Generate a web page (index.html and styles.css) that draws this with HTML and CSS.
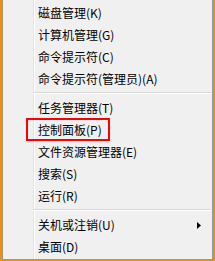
FILE: index.html
```html
<!DOCTYPE html>
<html lang="zh-CN">
<head>
<meta charset="utf-8">
<link rel="stylesheet" href="styles.css">
</head>
<body>
<div class="menu">
  <div class="group first">
    <div class="item">磁盘管理(K)</div>
    <div class="item">计算机管理(G)</div>
    <div class="item">命令提示符(C)</div>
    <div class="item">命令提示符(管理员)(A)</div>
  </div>
  <div class="sep"></div>
  <div class="group">
    <div class="item">任务管理器(T)</div>
    <div class="item marked">控制面板(P)<span class="mark"></span></div>
    <div class="item">文件资源管理器(E)</div>
    <div class="item">搜索(S)</div>
    <div class="item">运行(R)</div>
  </div>
  <div class="sep"></div>
  <div class="group">
    <div class="item sub">关机或注销(U)<svg class="arrow" width="4" height="7" viewBox="0 0 4 7"><path d="M0 0 L4 3.5 L0 7 Z" fill="#000"/></svg></div>
    <div class="item">桌面(D)</div>
  </div>
</div>
</body>
</html>
```

FILE: styles.css
```css
html, body {
  margin: 0;
  padding: 0;
}
body {
  width: 215px;
  height: 261px;
  background: #e8900f;
  overflow: hidden;
  font-family: "Noto Sans CJK SC", "Microsoft YaHei", sans-serif;
  font-size: 12px;
  color: #000;
}
.menu {
  margin-left: 2px;
  width: 209px;
  height: 259px;
  border: 1px solid #979797;
  border-top: none;
  background-color: #f0f0f0;
  background-image: linear-gradient(to right, transparent 30px, #e2e3e3 30px, #e2e3e3 31px, #ffffff 31px, #ffffff 32px, transparent 32px);
  padding-left: 32px;
  box-sizing: content-box;
  display: flex;
  flex-direction: column;
  width: 177px;
}
.group.first {
  margin-top: 2px;
}
.item {
  height: 22px;
  line-height: 22px;
  padding-left: 3px;
  position: relative;
  white-space: nowrap;
}
.sep {
  margin: 2px 1px 3px -2px;
  border-top: 1px solid #d7d7d7;
  border-bottom: 1px solid #ffffff;
}
.mark {
  position: absolute;
  left: -9px;
  top: -1px;
  width: 80px;
  height: 19px;
  border: 2px solid #ff0000;
}
.arrow {
  position: absolute;
  left: 162px;
  top: 8px;
}
```
